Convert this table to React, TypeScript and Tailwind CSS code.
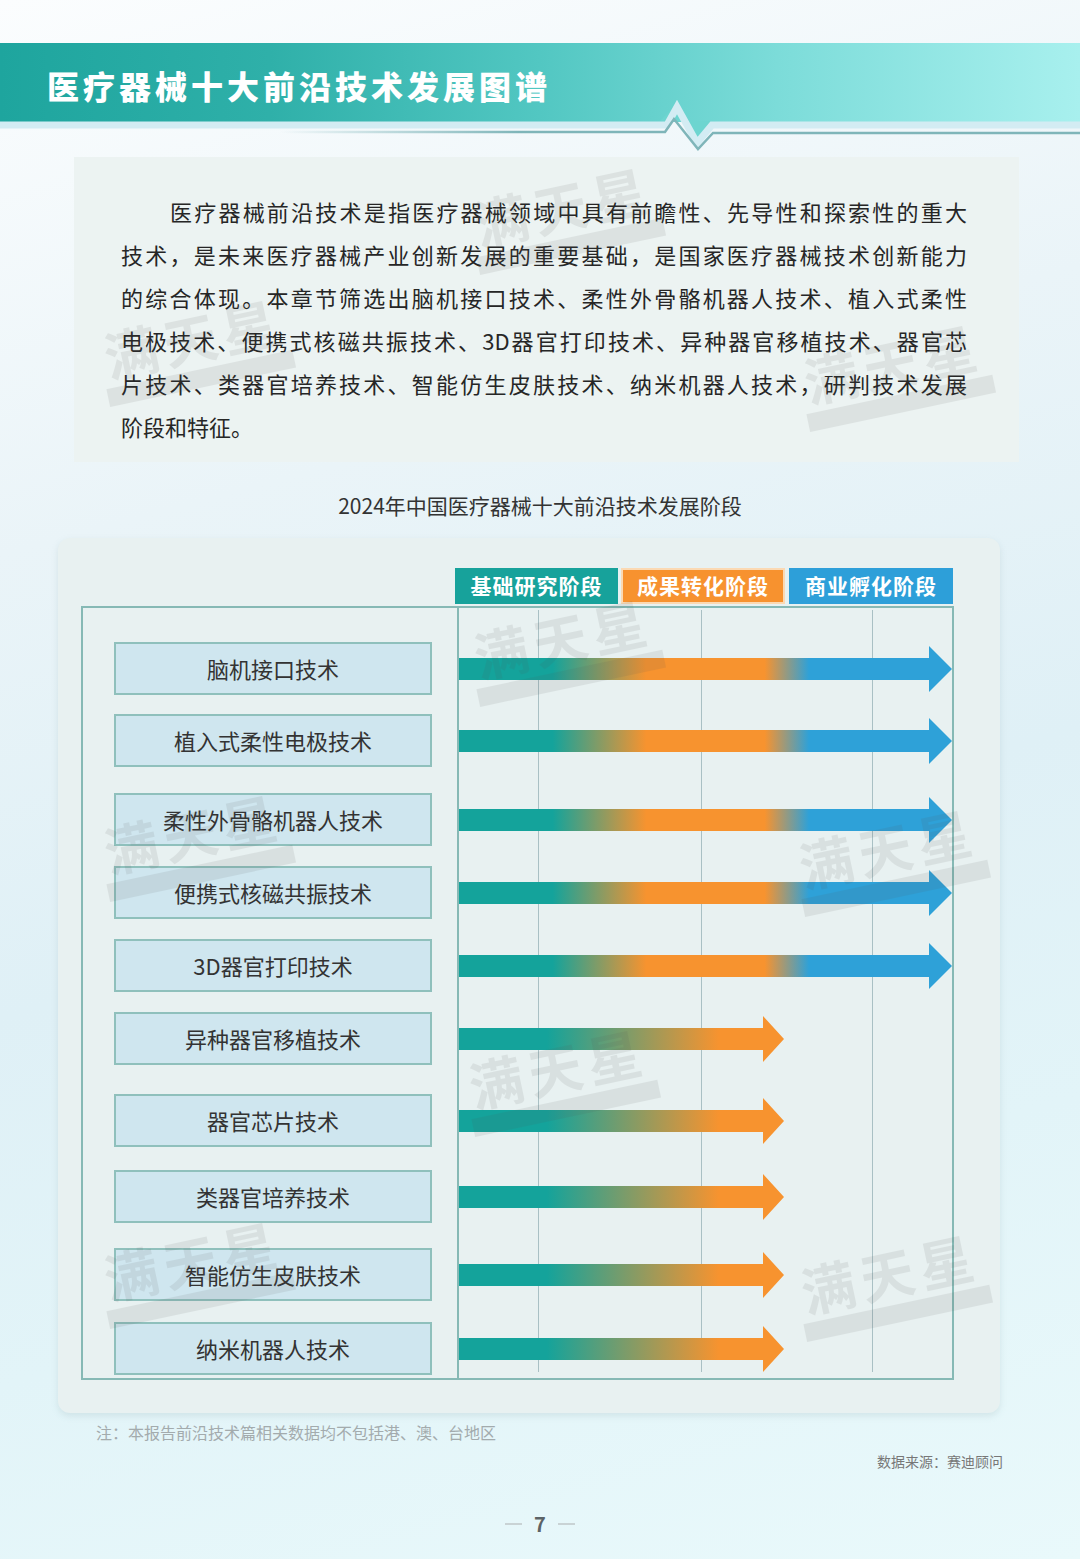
import React from "react";

const rows = [
  { name: "脑机接口技术", mt: "mt-[34px]", long: true },
  { name: "植入式柔性电极技术", mt: "mt-[19px]", long: true },
  { name: "柔性外骨骼机器人技术", mt: "mt-[26px]", long: true },
  { name: "便携式核磁共振技术", mt: "mt-[20px]", long: true },
  { name: "3D器官打印技术", mt: "mt-[20px]", long: true },
  { name: "异种器官移植技术", mt: "mt-[20px]", long: false },
  { name: "器官芯片技术", mt: "mt-[29px]", long: false },
  { name: "类器官培养技术", mt: "mt-[23px]", long: false },
  { name: "智能仿生皮肤技术", mt: "mt-[25px]", long: false },
  { name: "纳米机器人技术", mt: "mt-[21px]", long: false },
];

const lines = [
  "医疗器械前沿技术是指医疗器械领域中具有前瞻性、先导性和探索性的重大",
  "技术，是未来医疗器械产业创新发展的重要基础，是国家医疗器械技术创新能力",
  "的综合体现。本章节筛选出脑机接口技术、柔性外骨骼机器人技术、植入式柔性",
  "电极技术、便携式核磁共振技术、3D器官打印技术、异种器官移植技术、器官芯",
  "片技术、类器官培养技术、智能仿生皮肤技术、纳米机器人技术，研判技术发展",
];

const TEAL = "#14a39b";
const ORANGE = "#f7932f";
const BLUE = "#2ea1d8";

function Arrow({ long, id }: { long: boolean; id: string }) {
  const tip = long ? 493 : 325;
  const bar = long ? 470 : 304;
  return (
    <svg width="493" height="46" viewBox="0 0 493 46" className="block">
      <defs>
        <linearGradient id={id} gradientUnits="userSpaceOnUse" x1="0" y1="0" x2={tip} y2="0">
          {long ? (
            <>
              <stop offset="0" stopColor={TEAL} />
              <stop offset="0.19" stopColor={TEAL} />
              <stop offset="0.38" stopColor={ORANGE} />
              <stop offset="0.62" stopColor={ORANGE} />
              <stop offset="0.71" stopColor={BLUE} />
              <stop offset="1" stopColor={BLUE} />
            </>
          ) : (
            <>
              <stop offset="0" stopColor={TEAL} />
              <stop offset="0.27" stopColor={TEAL} />
              <stop offset="0.8" stopColor={ORANGE} />
              <stop offset="1" stopColor={ORANGE} />
            </>
          )}
        </linearGradient>
      </defs>
      <path d={`M0 12 H${bar} V0 L${tip} 23 L${bar} 46 V34 H0 Z`} fill={`url(#${id})`} />
    </svg>
  );
}

function Watermark({ pos }: { pos: string }) {
  return (
    <div className={`pointer-events-none absolute ${pos} flex -rotate-[12deg] flex-col items-center opacity-[0.1]`}>
      <div className="whitespace-nowrap text-[54px] font-bold leading-none tracking-[6px] text-[#555]">满天星</div>
      <div className="mt-[6px] h-[18px] w-[190px] bg-[#555]" />
    </div>
  );
}

export default function App() {
  return (
    <div className="relative h-[1559px] w-[1080px] overflow-hidden bg-[linear-gradient(165deg,#fbfdfe_0%,#eaf4f8_30%,#dff0f6_55%,#e2f4f8_75%,#e9f9fb_100%)] font-['Noto_Sans_CJK_SC','Noto_Sans',sans-serif] text-[#2f2f2f]">
      {/* Header band */}
      <div className="relative mt-[43px] flex h-[79px] items-center bg-[linear-gradient(90deg,#1ea59e_0%,#2fb0a9_25%,#52c7c2_50%,#7cdcd9_72%,#a8f0ee_100%)] pl-[47px] pt-[4px]">
        <h1 className="whitespace-nowrap text-[32px] font-black leading-none tracking-[4px] text-white">医疗器械十大前沿技术发展图谱</h1>
      </div>
      <svg className="pointer-events-none absolute left-0 top-[98px]" width="1080" height="60" viewBox="0 98 1080 60">
        <defs>
          <linearGradient id="hb" gradientUnits="userSpaceOnUse" x1="280" y1="0" x2="520" y2="0">
            <stop offset="0" stopColor="#7fb5b9" stopOpacity="0" />
            <stop offset="1" stopColor="#7fb5b9" stopOpacity="1" />
          </linearGradient>
        </defs>
        <polygon points="660,121 677,104 697,140 716,121" fill="#6dd5d0" />
        <polyline points="0,125 667,125 677,107 697,143 712,125 1080,125" fill="none" stroke="#d3ecf3" strokeWidth="7" />
        <polyline points="280,132 665,132 674,119 698,149 713,133 1080,133" fill="none" stroke="url(#hb)" strokeWidth="2.5" />
      </svg>

      {/* Intro text box */}
      <div className="mx-[74px] mt-[35px] w-[945px] bg-[#ecf3f2] pb-[14px] pl-[47px] pr-[52px] pt-[33px] text-[22px] leading-[43px] text-[#262626]">
        {lines.map((l, i) => (
          <div key={i} className={`text-justify [text-align-last:justify] ${i === 0 ? "indent-[49px]" : ""}`}>
            {l}
          </div>
        ))}
        <div>阶段和特征。</div>
      </div>

      {/* Chart title */}
      <div className="mt-[29px] text-center text-[21px] leading-[28px] text-[#333]">2024年中国医疗器械十大前沿技术发展阶段</div>

      {/* Chart panel */}
      <div className="ml-[58px] mt-[19px] w-[942px] rounded-[12px] bg-[#e8f1f1] pb-[33px] pl-[23px] pt-[30px] shadow-[0_3px_6px_rgba(150,180,185,0.25)]">
        <div className="flex h-[36px] pl-[374px] text-[21px] font-bold text-white">
          <div className="flex w-[163px] items-center justify-center bg-[#17a29b] tracking-[1px]">基础研究阶段</div>
          <div className="ml-[3px] flex w-[164px] items-center justify-center border-2 border-[#fbd9b3] bg-[#f7922f] tracking-[1px]">成果转化阶段</div>
          <div className="ml-[4px] flex w-[164px] items-center justify-center bg-[#2d9fd9] tracking-[1px]">商业孵化阶段</div>
        </div>
        <div className="mt-[2px] flex w-[873px] border-2 border-[#86b9b5]">
          <div className="flex w-[376px] flex-col border-r-2 border-[#86b9b5] pb-[3px] pl-[31px]">
            {rows.map((r) => (
              <div
                key={r.name}
                className={`${r.mt} flex h-[53px] w-[318px] items-center justify-center border-2 border-[#8fc0bc] bg-[#cfe6ef] text-[22px] text-[#333]`}
              >
                {r.name}
              </div>
            ))}
          </div>
          <div className="relative flex flex-1 flex-col">
            <div className="absolute bottom-[6px] left-[79px] top-[2px] w-px bg-[#a9c0c4]" />
            <div className="absolute bottom-[6px] left-[242px] top-[2px] w-px bg-[#a9c0c4]" />
            <div className="absolute bottom-[6px] left-[413px] top-[2px] w-px bg-[#a9c0c4]" />
            {rows.map((r, i) => (
              <div key={r.name} className={`${r.mt} relative flex h-[53px] items-center`}>
                <Arrow long={r.long} id={`g${i}`} />
              </div>
            ))}
          </div>
        </div>
      </div>

      {/* Footer */}
      <div className="mt-[8px] pl-[96px] text-[16px] leading-[22px] text-[#a3abad]">注：本报告前沿技术篇相关数据均不包括港、澳、台地区</div>
      <div className="mt-[8px] pr-[77px] text-right text-[14px] leading-[20px] text-[#777]">数据来源：赛迪顾问</div>
      <div className="mt-[43px] flex items-center justify-center gap-[12px]">
        <div className="h-[2px] w-[17px] bg-[#c9d3d5]" />
        <div className="text-[20px] font-bold leading-none text-[#5c6366]">7</div>
        <div className="h-[2px] w-[17px] bg-[#c9d3d5]" />
      </div>

      {/* Watermarks */}
      <Watermark pos="left-[470px] top-[178px]" />
      <Watermark pos="left-[100px] top-[310px]" />
      <Watermark pos="left-[800px] top-[335px]" />
      <Watermark pos="left-[470px] top-[610px]" />
      <Watermark pos="left-[100px] top-[805px]" />
      <Watermark pos="left-[795px] top-[820px]" />
      <Watermark pos="left-[465px] top-[1040px]" />
      <Watermark pos="left-[100px] top-[1232px]" />
      <Watermark pos="left-[797px] top-[1245px]" />
    </div>
  );
}
